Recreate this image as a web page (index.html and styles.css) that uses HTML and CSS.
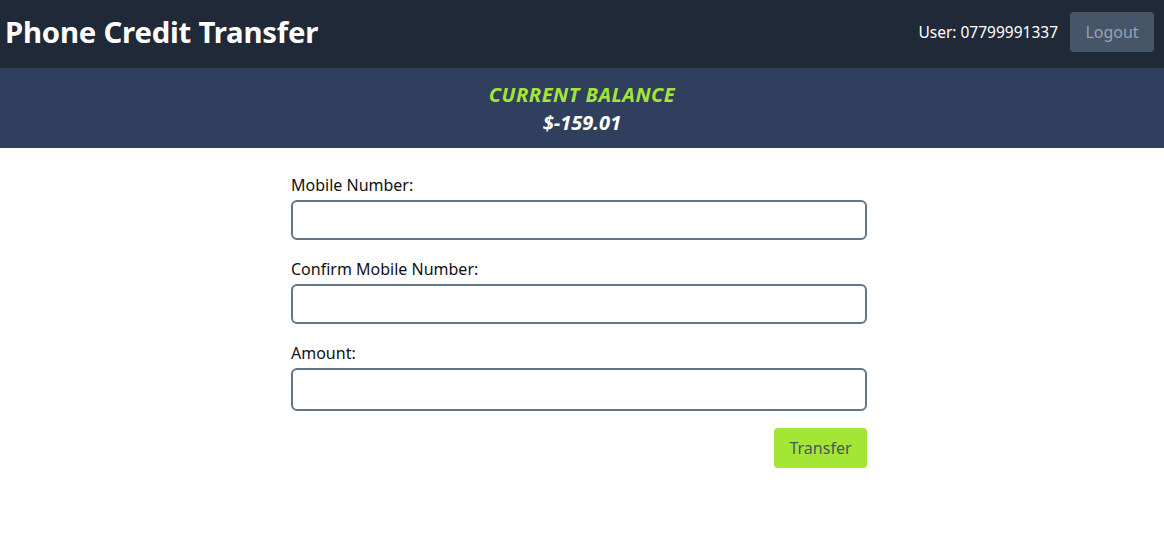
FILE: index.html
```
<!DOCTYPE html>
<html lang="en">
<head>
<meta charset="utf-8">
<title>Phone Credit Transfer</title>
<link rel="stylesheet" href="styles.css">
</head>
<body>
<header class="topbar">
  <h1 class="title">Phone Credit Transfer</h1>
  <div class="user-area">
    <span class="user">User: 07799991337</span>
    <button class="logout" type="button">Logout</button>
  </div>
</header>
<section class="balance">
  <div class="balance-label">CURRENT BALANCE</div>
  <div class="balance-value">$-159.01</div>
</section>
<main class="main">
  <form class="form">
    <label class="field">
      <span class="label">Mobile Number:</span>
      <input class="input" type="text">
    </label>
    <label class="field">
      <span class="label">Confirm Mobile Number:</span>
      <input class="input" type="text">
    </label>
    <label class="field">
      <span class="label">Amount:</span>
      <input class="input input-tall" type="text">
    </label>
    <div class="actions">
      <button class="transfer" type="button">Transfer</button>
    </div>
  </form>
</main>
</body>
</html>
```
FILE: styles.css
```
* { box-sizing: border-box; }
body {
  margin: 0;
  font-family: "Noto Sans", "Open Sans", sans-serif;
  background: #ffffff;
  color: #111827;
}
.topbar {
  height: 68px;
  background: #1f2937;
  display: flex;
  align-items: center;
  justify-content: space-between;
  padding: 0 10px 4px 5px;
}
.title {
  margin: 0;
  color: #ffffff;
  font-size: 29.3px;
  font-weight: 700;
  letter-spacing: -0.2px;
}
.user-area {
  display: flex;
  align-items: center;
  gap: 12px;
}
.user {
  color: #ffffff;
  font-size: 15.5px;
}
.logout {
  width: 84px;
  height: 40px;
  border: none;
  border-radius: 4px;
  background: #475569;
  color: #94a3b8;
  font-family: inherit;
  font-size: 16px;
}
.balance {
  height: 80px;
  background: #313f5f;
  display: flex;
  flex-direction: column;
  align-items: center;
  justify-content: center;
  gap: 1px;
  font-style: italic;
  font-weight: 700;
  font-size: 20px;
}
.balance-label { color: #a3e635; letter-spacing: 0.5px; }
.balance-value { color: #ffffff; }
.main {
  display: flex;
  justify-content: center;
  padding: 27px 6px 0 0;
}
.form {
  width: 576px;
  display: flex;
  flex-direction: column;
  gap: 19px;
}
.field {
  display: flex;
  flex-direction: column;
  gap: 5px;
}
.label {
  font-size: 16px;
  color: #111111;
  line-height: 20px;
}
.input {
  height: 40px;
  border: 2px solid #64748b;
  border-radius: 6px;
  background: #ffffff;
  font-family: inherit;
  font-size: 16px;
}
.input-tall { height: 43px; }
.actions {
  display: flex;
  justify-content: flex-end;
  margin-top: -2px;
}
.transfer {
  width: 93px;
  height: 40px;
  border: none;
  border-radius: 4px;
  background: #a3e635;
  color: #4b5563;
  font-family: inherit;
  font-size: 16px;
}
```
